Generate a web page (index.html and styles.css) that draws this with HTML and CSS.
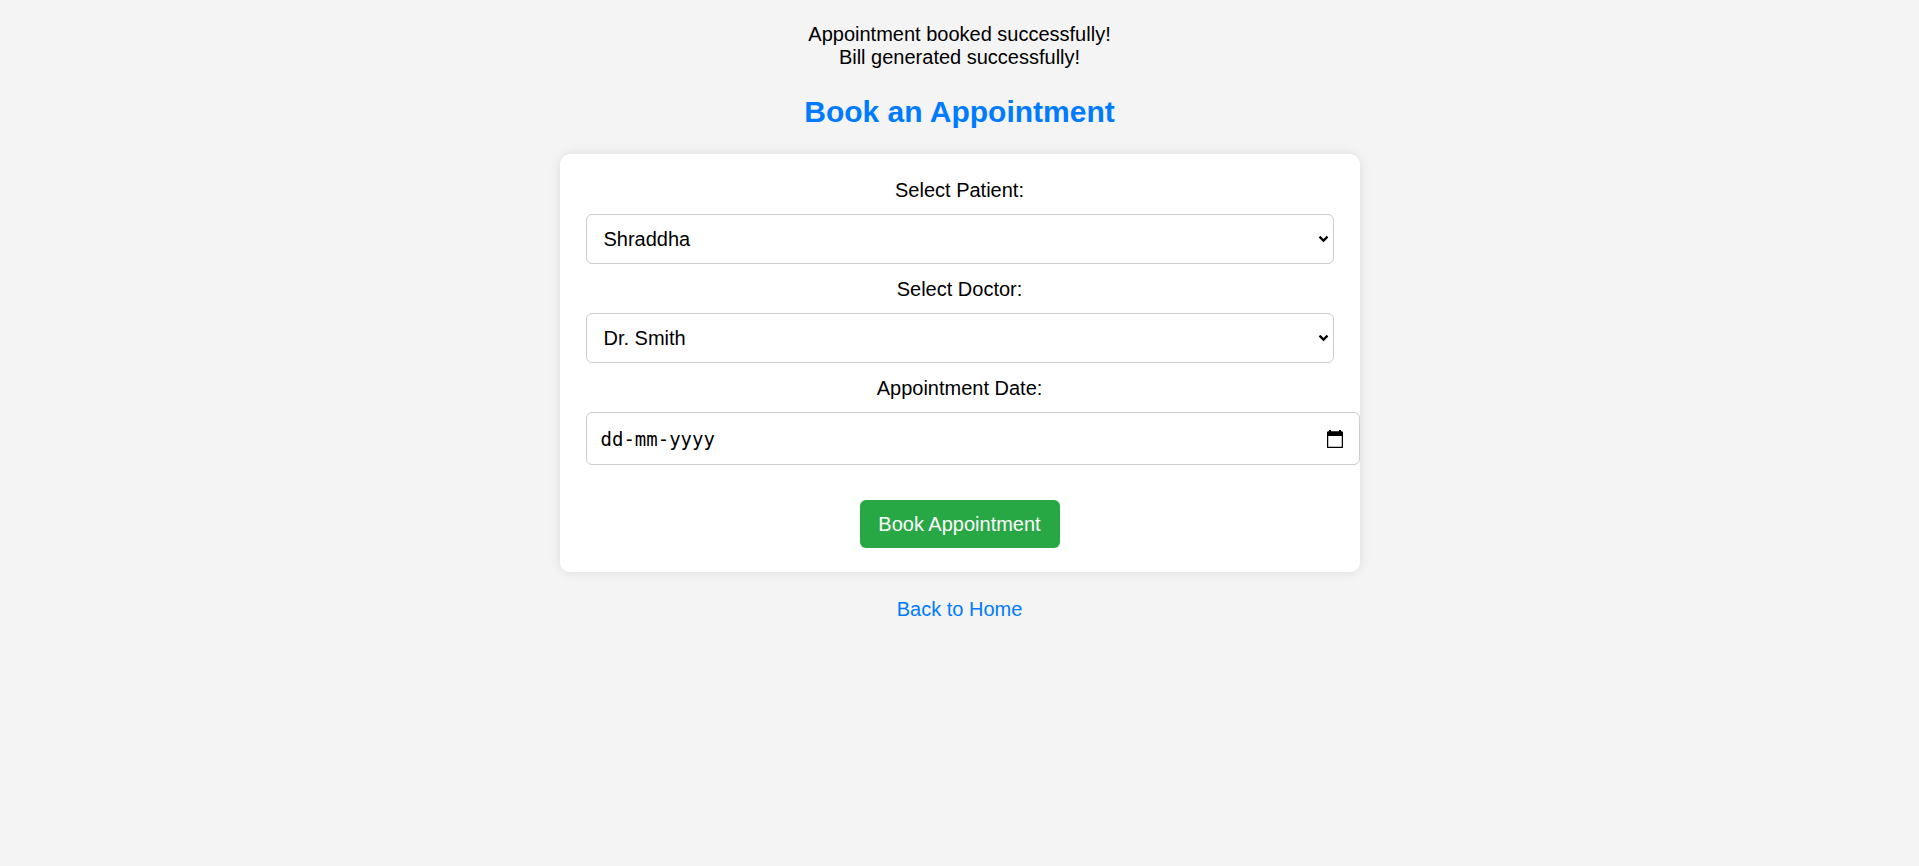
FILE: index.html
```html
<!DOCTYPE html>
<html lang="en">
<head>
<meta charset="utf-8">
<title>Book an Appointment</title>
<link rel="stylesheet" href="styles.css">
</head>
<body>
<div class="page">
  <div class="messages">
    <div>Appointment booked successfully!</div>
    <div>Bill generated successfully!</div>
  </div>
  <h2 class="title">Book an Appointment</h2>
  <form class="card">
    <label class="field-label">Select Patient:</label>
    <div class="select-wrap">
      <select class="select">
        <option>Shraddha</option>
      </select>
      <svg class="chevron" width="11" height="8" viewBox="0 0 11 8"><path d="M1.5 1.6 L5.5 5.6 L9.5 1.6" fill="none" stroke="#000" stroke-width="2.2"/></svg>
    </div>
    <label class="field-label">Select Doctor:</label>
    <div class="select-wrap">
      <select class="select">
        <option>Dr. Smith</option>
      </select>
      <svg class="chevron" width="11" height="8" viewBox="0 0 11 8"><path d="M1.5 1.6 L5.5 5.6 L9.5 1.6" fill="none" stroke="#000" stroke-width="2.2"/></svg>
    </div>
    <label class="field-label">Appointment Date:</label>
    <div class="date-input">
      <span class="date-text">dd-mm-yyyy</span>
      <svg class="cal" width="16" height="18" viewBox="0 0 16 18">
        <rect x="2" y="0" width="2" height="3" fill="#000"/>
        <rect x="12" y="0" width="2" height="3" fill="#000"/>
        <path d="M1.5 2 H14.5 Q15.5 2 15.5 3 V16.5 Q15.5 17.5 14.5 17.5 H1.5 Q0.5 17.5 0.5 16.5 V3 Q0.5 2 1.5 2 Z" fill="none" stroke="#000" stroke-width="1.5"/>
        <rect x="0.5" y="2" width="15" height="4" fill="#000"/>
      </svg>
    </div>
    <div class="actions">
      <button type="button" class="btn">Book Appointment</button>
    </div>
  </form>
  <div class="back">
    <a href="#" class="back-link">Back to Home</a>
  </div>
</div>
</body>
</html>
```

FILE: styles.css
```css
* {
  box-sizing: border-box;
}

html, body {
  margin: 0;
  padding: 0;
  background: #f4f4f4;
}

body {
  font-family: "Liberation Sans", Arial, sans-serif;
  font-size: 20px;
  color: #000;
}

.page {
  padding: 22.5px 10px 0;
  text-align: center;
}

.messages {
  line-height: 23px;
}

.title {
  margin: 26px 0 25px;
  font-size: 30px;
  line-height: 34.5px;
  font-weight: bold;
  color: #007bff;
}

.card {
  width: 800px;
  margin: 0 auto;
  background: #fff;
  padding: 25px 26px 24px;
  border-radius: 10px;
  box-shadow: 0 0 12px rgba(0, 0, 0, 0.1);
  text-align: center;
}

.field-label {
  display: block;
  line-height: 23px;
  margin-bottom: 12px;
}

.select-wrap {
  position: relative;
  margin-bottom: 14px;
}

.select {
  display: block;
  width: 100%;
  height: 50px;
  padding: 0 30px 0 17px;
  border: 1px solid #ccc;
  border-radius: 6px;
  background: #fff;
  font-family: "Liberation Sans", Arial, sans-serif;
  font-size: 20px;
  color: #000;
  -webkit-appearance: none;
  appearance: none;
  text-align: left;
}

.chevron {
  position: absolute;
  right: 5px;
  top: 21px;
  pointer-events: none;
}

.date-input {
  width: calc(100% + 26px);
  height: 52.5px;
  border: 1px solid #ccc;
  border-radius: 6px;
  background: #fff;
  display: flex;
  align-items: center;
  justify-content: space-between;
  padding: 0 16px 0 14px;
}

.date-text {
  font-family: "DejaVu Sans Mono", monospace;
  font-size: 19px;
  color: #000;
  padding-top: 1px;
}

.cal {
  display: block;
  margin-top: 1px;
}

.actions {
  display: flex;
  justify-content: center;
  margin-top: 35.5px;
}

.btn {
  width: 200px;
  height: 48px;
  padding: 0;
  border: none;
  border-radius: 6px;
  background: #28a745;
  color: #fff;
  font-family: "Liberation Sans", Arial, sans-serif;
  font-size: 20px;
}

.back {
  margin-top: 26px;
  line-height: 23px;
}

.back-link {
  color: #007bff;
  text-decoration: none;
}
```
